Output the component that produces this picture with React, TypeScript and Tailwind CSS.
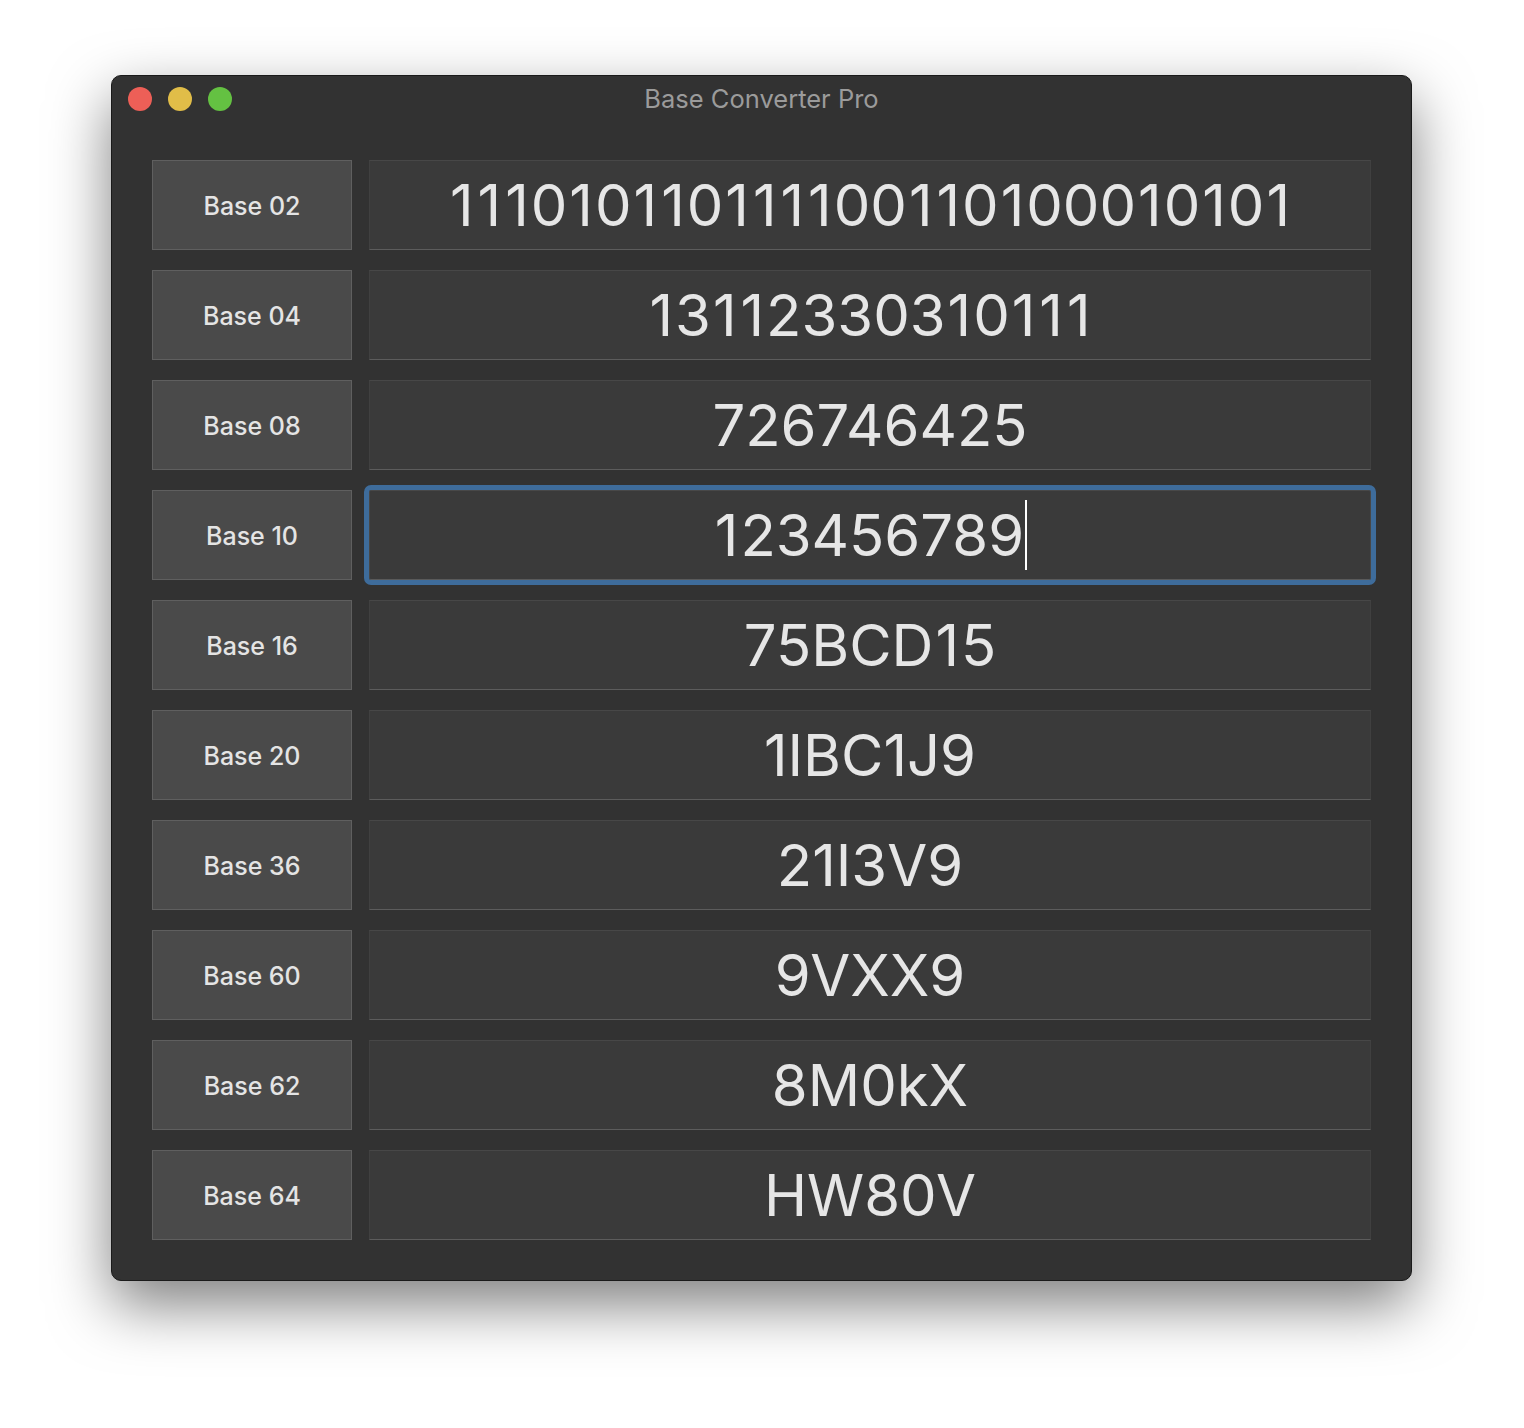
import React from "react";

const rows: { label: string; value: string; focused?: boolean }[] = [
    { label: "Base 02", value: "111010110111100110100010101" },
    { label: "Base 04", value: "13112330310111" },
    { label: "Base 08", value: "726746425" },
    { label: "Base 10", value: "123456789", focused: true },
    { label: "Base 16", value: "75BCD15" },
    { label: "Base 20", value: "1IBC1J9" },
    { label: "Base 36", value: "21I3V9" },
    { label: "Base 60", value: "9VXX9" },
    { label: "Base 62", value: "8M0kX" },
    { label: "Base 64", value: "HW80V" },
];

function Digits({ text }: { text: string }) {
    const isDigit = (c?: string) => c !== undefined && c >= "0" && c <= "9";
    return (
        <span className="leading-none">
            {text.split("").map((c, i) =>
                c === "1" && (isDigit(text[i + 1]) || (i === text.length - 1 && isDigit(text[i - 1]))) ? (
                    <span key={i} className="px-[2px]">
                        {c}
                    </span>
                ) : (
                    <React.Fragment key={i}>{c}</React.Fragment>
                ),
            )}
        </span>
    );
}

function BaseRow({ label, value, focused }: { label: string; value: string; focused?: boolean }) {
    return (
        <div className="flex h-[90px] gap-[17px]">
            <div className="flex w-[200px] shrink-0 items-center justify-center border border-[#5f5f5f] bg-[#4a4a4a] pt-[4px] text-[25px] font-medium text-[#e4e4e4]">
                {label}
            </div>
            <div
                className={
                    focused
                        ? "flex flex-1 items-center justify-center border border-[#484848] border-b-[#5a5a5a] bg-[#3a3a3a] text-[58px] text-[#e6e6e6] outline-[5px] outline-solid outline-[#3e6c9b] rounded-[2px]"
                        : "flex flex-1 items-center justify-center border border-[#404040] border-t-[#474747] border-b-[#5c5c5c] bg-[#3a3a3a] text-[58px] text-[#e6e6e6]"
                }
            >
                <Digits text={value} />
                {focused && <span className="ml-[1px] h-[70px] w-[2px] bg-white" />}
            </div>
        </div>
    );
}

export default function App() {
    return (
        <div
            className="h-[1428px] w-[1524px] bg-white pl-[111px] pt-[75px]"
            style={{ fontFamily: 'Inter, "Liberation Sans", Arial, sans-serif' }}
        >
            <div className="flex w-[1301px] flex-col rounded-[10px] border border-[#1a1a1a] bg-[#323232] shadow-[0_24px_60px_rgba(0,0,0,0.5)]">
                <div className="relative flex h-[46px] items-center px-[16px]">
                    <div className="flex gap-[16px]">
                        <span className="h-[24px] w-[24px] rounded-full bg-[#ed5f57]" />
                        <span className="h-[24px] w-[24px] rounded-full bg-[#e1bd48]" />
                        <span className="h-[24px] w-[24px] rounded-full bg-[#64c142]" />
                    </div>
                    <div className="absolute inset-x-0 top-0 flex h-[46px] items-center justify-center text-[25.5px] text-[#9b9b9b]">
                        Base Converter Pro
                    </div>
                </div>
                <div className="flex flex-col gap-[20px] px-[40px] pb-[40px] pt-[38px]">
                    {rows.map((r) => (
                        <BaseRow key={r.label} {...r} />
                    ))}
                </div>
            </div>
        </div>
    );
}
